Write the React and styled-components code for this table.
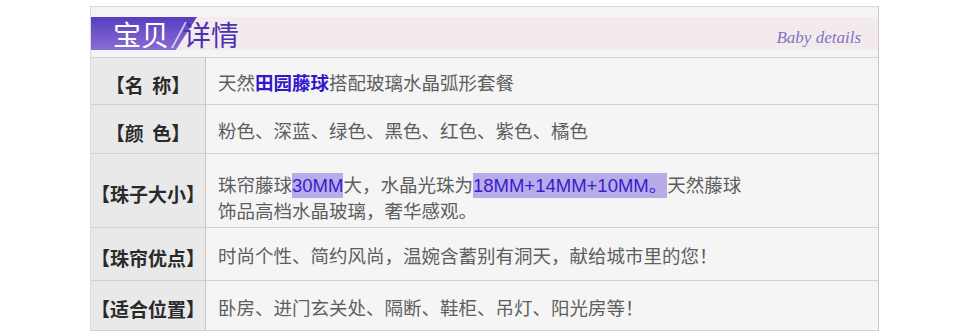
import React from "react";
import styled, { createGlobalStyle } from "styled-components";

const GlobalStyle = createGlobalStyle`
  body {
    margin: 0;
    background: #ffffff;
    font-family: "Liberation Sans", "Noto Sans CJK SC", sans-serif;
  }
`;

const Frame = styled.div`
  box-sizing: border-box;
  width: 789px;
  margin: 6px 0 0 90px;
  border: 1px solid #dadada;
  border-right-color: #c9c9c9;
  border-bottom: none;
  background: #f4f4f4;
`;

const Header = styled.div`
  padding: 10px 0 7px;
  border-bottom: 1px solid #d2d2d2;
`;

const Band = styled.div`
  position: relative;
  display: flex;
  align-items: center;
  height: 33px;
  padding: 0 17px 0 22px;
  background: #f3eaee;

  &::before {
    content: "";
    position: absolute;
    left: 0;
    top: 0;
    width: 106px;
    height: 100%;
    background: linear-gradient(#573dc0, #8a6cd6);
    clip-path: polygon(0 0, 100% 0, 80% 100%, 0 100%);
  }

  &::after {
    content: "";
    position: absolute;
    left: 87px;
    top: 5px;
    width: 1.5px;
    height: 26px;
    background: rgba(255, 255, 255, 0.7);
    transform: skewX(-28deg);
  }
`;

const Title = styled.span`
  position: relative;
  z-index: 1;
  font-family: "Noto Sans CJK SC", sans-serif;
  font-size: 28px;
  line-height: 1;
  color: ${(p) => (p.$light ? "#ffffff" : "#4a32b0")};
  margin-right: ${(p) => (p.$light ? "14px" : "0")};
`;

const Subtitle = styled.span`
  margin-left: auto;
  font-family: "Liberation Serif", serif;
  font-style: italic;
  font-size: 17px;
  line-height: 1;
  color: #8075c4;
  padding-top: 7px;
`;

const Row = styled.div`
  display: flex;
  height: ${(p) => p.$h}px;
  border-bottom: 1px solid #d0d0d0;
`;

const Label = styled.div`
  box-sizing: border-box;
  width: 115px;
  flex-shrink: 0;
  display: flex;
  align-items: center;
  justify-content: center;
  padding-top: 6px;
  background: #e9e9e9;
  border-right: 1px solid #c6c6c6;
  font-family: "Noto Sans CJK SC", sans-serif;
  font-weight: 700;
  font-size: 19px;
  color: #2a2a2a;
  white-space: nowrap;
`;

const Content = styled.div`
  flex: 1;
  display: flex;
  align-items: center;
  padding: ${(p) => p.$top || 6}px 0 0 12px;
  background: #f5f5f5;
  font-size: 18.5px;
  line-height: 26px;
  color: #5e5e5e;
`;

const Strong = styled.span`
  color: #3118c8;
  font-weight: 700;
`;

const Mark = styled.span`
  background: #b8ace8;
  color: #3a1ccc;
  padding: 2px 0;
`;

const rows = [
  {
    label: "【名\u00a0\u00a0称】",
    h: 46,
    content: (
      <>
        天然<Strong>田园藤球</Strong>搭配玻璃水晶弧形套餐
      </>
    ),
  },
  {
    label: "【颜\u00a0\u00a0色】",
    h: 48,
    content: "粉色、深蓝、绿色、黑色、红色、紫色、橘色",
  },
  {
    label: "【珠子大小】",
    h: 73,
    top: 16,
    content: (
      <span>
        珠帘藤球<Mark>30MM</Mark>大，水晶光珠为<Mark>18MM+14MM+10MM。</Mark>天然藤球
        <br />
        饰品高档水晶玻璃，奢华感观。
      </span>
    ),
  },
  {
    label: "【珠帘优点】",
    h: 52,
    content: "时尚个性、简约风尚，温婉含蓄别有洞天，献给城市里的您！",
  },
  {
    label: "【适合位置】",
    h: 49,
    content: "卧房、进门玄关处、隔断、鞋柜、吊灯、阳光房等！",
  },
];

export default function App() {
  return (
    <>
      <GlobalStyle />
      <Frame>
        <Header>
          <Band>
            <Title $light>宝贝</Title>
            <Title>详情</Title>
            <Subtitle>Baby details</Subtitle>
          </Band>
        </Header>
        {rows.map((r) => (
          <Row key={r.label} $h={r.h}>
            <Label>{r.label}</Label>
            <Content $top={r.top}>{r.content}</Content>
          </Row>
        ))}
      </Frame>
    </>
  );
}
